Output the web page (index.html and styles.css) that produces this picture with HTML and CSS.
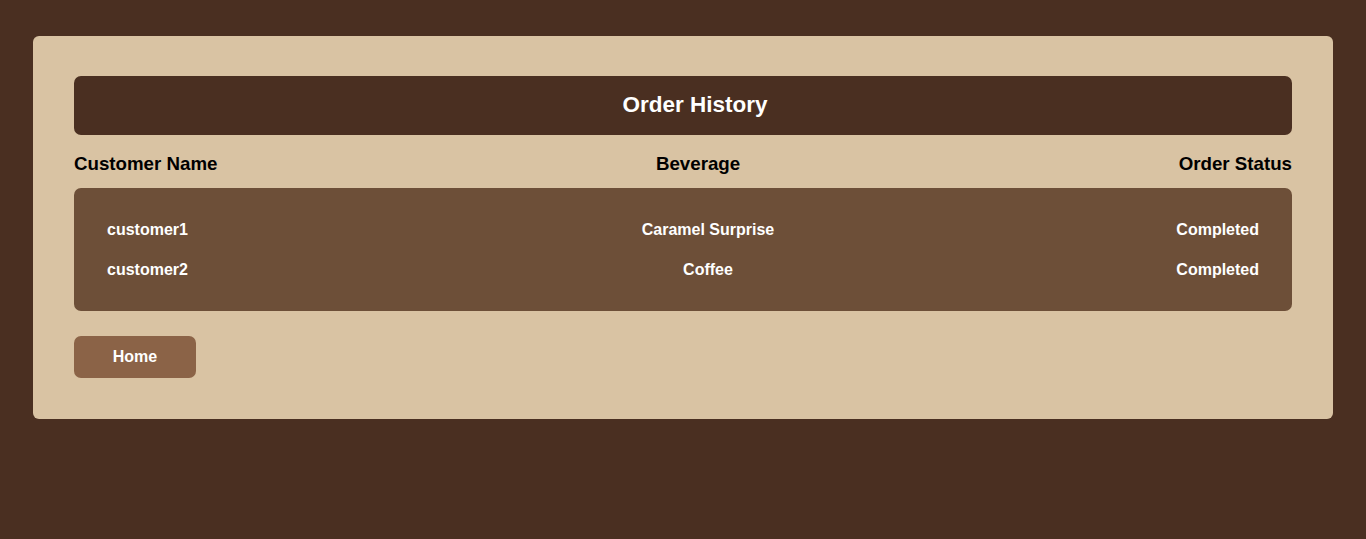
FILE: index.html
```html
<!DOCTYPE html>
<html lang="en">
<head>
<meta charset="utf-8">
<title>Order History</title>
<link rel="stylesheet" href="styles.css">
</head>
<body>
<div class="card">
  <div class="title-bar"><h1 class="title">Order History</h1></div>
  <div class="col-heads">
    <span>Customer Name</span>
    <span>Beverage</span>
    <span>Order Status</span>
  </div>
  <div class="orders">
    <div class="row">
      <span class="c-name">customer1</span>
      <span class="c-bev">Caramel Surprise</span>
      <span class="c-status">Completed</span>
    </div>
    <div class="row">
      <span class="c-name">customer2</span>
      <span class="c-bev">Coffee</span>
      <span class="c-status">Completed</span>
    </div>
  </div>
  <button class="home-btn">Home</button>
</div>
</body>
</html>
```
FILE: styles.css
```css
html, body {
  margin: 0;
  padding: 0;
}
body {
  background: #4a2f21;
  font-family: "Liberation Sans", Arial, sans-serif;
  padding-top: 36px;
  height: 539px;
  box-sizing: border-box;
}
.card {
  width: 1300px;
  margin: 0 auto;
  box-sizing: border-box;
  background: #d9c3a3;
  border-radius: 6px;
  padding: 40px 41px 41px 41px;
}
.title-bar {
  background: #4a2f21;
  border-radius: 7px;
  height: 59px;
  display: flex;
  align-items: center;
  justify-content: center;
  padding-left: 24px;
}
.title {
  margin: 0 0 2px;
  color: #fff;
  font-size: 22.5px;
  font-weight: bold;
}
.col-heads {
  display: flex;
  justify-content: space-between;
  margin: 19px 0 14px;
  line-height: 20px;
  font-size: 18.72px;
  font-weight: bold;
  color: #000;
}
.orders {
  background: #6d4f38;
  border-radius: 7px;
  padding: 22px 33px 21px;
}
.row {
  display: grid;
  grid-template-columns: 451px 300px 1fr;
  height: 40px;
  align-items: center;
  color: #fff;
  font-size: 16px;
  font-weight: bold;
}
.c-bev { text-align: center; }
.c-status { text-align: right; }
.home-btn {
  margin-top: 25px;
  width: 122px;
  height: 42px;
  border: none;
  border-radius: 7px;
  background: #8b6347;
  color: #fff;
  font-family: "Liberation Sans", Arial, sans-serif;
  font-size: 16px;
  font-weight: bold;
  display: block;
  padding: 0;
}
```
